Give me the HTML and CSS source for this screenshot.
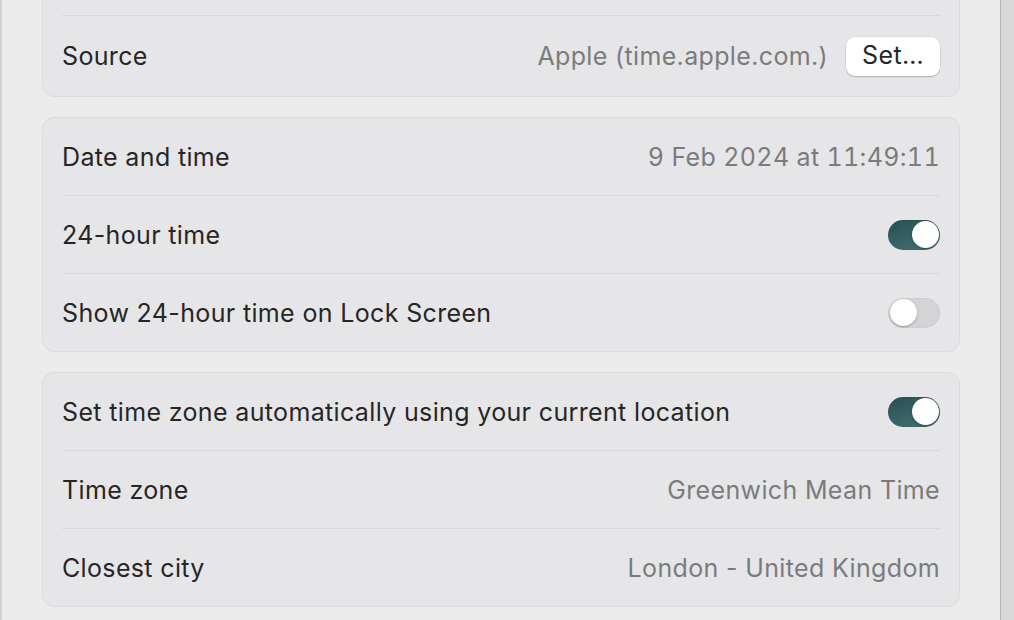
FILE: index.html
```html
<!DOCTYPE html>
<html lang="en">
<head>
<meta charset="utf-8">
<title>Date &amp; Time</title>
<link rel="stylesheet" href="styles.css">
</head>
<body>
<div class="window">
  <div class="edge"></div>
  <main class="content">
    <section class="card first">
      <div class="row"></div>
      <div class="row tall">
        <span class="label">Source</span>
        <span class="right">
          <span class="value">Apple (time.apple.com.)</span>
          <button class="btn">Set…</button>
        </span>
      </div>
    </section>
    <section class="card">
      <div class="row">
        <span class="label">Date and time</span>
        <span class="value digits">9 Feb 2024 at 11:49:11</span>
      </div>
      <div class="row">
        <span class="label">24-hour time</span>
        <span class="toggle on"><span class="knob"></span></span>
      </div>
      <div class="row">
        <span class="label">Show 24-hour time on Lock Screen</span>
        <span class="toggle"><span class="knob"></span></span>
      </div>
    </section>
    <section class="card">
      <div class="row">
        <span class="label">Set time zone automatically using your current location</span>
        <span class="toggle on"><span class="knob"></span></span>
      </div>
      <div class="row">
        <span class="label">Time zone</span>
        <span class="value">Greenwich Mean Time</span>
      </div>
      <div class="row">
        <span class="label">Closest city</span>
        <span class="value">London - United Kingdom</span>
      </div>
    </section>
  </main>
  <div class="scrollbar"></div>
</div>
</body>
</html>
```

FILE: styles.css
```css
* { box-sizing: border-box; }
html, body {
  margin: 0;
  padding: 0;
  height: 100%;
  overflow: hidden;
}
body {
  background: #ececed;
  font-family: Inter, "Noto Sans", "Liberation Sans", sans-serif;
  font-size: 25px;
  letter-spacing: 0.35px;
  color: #262626;
}
.window {
  display: flex;
  height: 620px;
  width: 1014px;
}
.edge {
  width: 2px;
  flex: none;
  background: #d2d2d4;
}
.content {
  flex: 1;
  padding: 0 40px;
  display: flex;
  flex-direction: column;
  gap: 20px;
}
.scrollbar {
  width: 14px;
  flex: none;
  background: #d9d9da;
  border-left: 1px solid #b4b4b6;
}
.card {
  background: #e6e6e8;
  border: 1px solid #dcdcde;
  border-radius: 12px;
  flex: none;
}
.card.first {
  margin-top: -63px;
}
.row {
  margin: 0 19px;
  height: 77px;
  display: flex;
  align-items: center;
  justify-content: space-between;
}
.row + .row {
  border-top: 1px solid #d9d9db;
  height: 78px;
}
.row.tall {
  height: 81px;
}
.label {
  color: #262626;
}
.value {
  color: #7b7b7d;
}
.digits {
  font-variant-numeric: tabular-nums;
}
.right {
  display: flex;
  align-items: center;
  gap: 18px;
}
.btn {
  font: inherit;
  letter-spacing: inherit;
  color: #262626;
  background: #ffffff;
  border: none;
  border-radius: 9px;
  width: 94px;
  height: 39px;
  padding: 0 0 2px;
  box-shadow: 0 1px 1.5px rgba(0,0,0,0.22), 0 0 0 0.5px rgba(0,0,0,0.06);
}
.toggle {
  width: 52px;
  height: 30px;
  border-radius: 15px;
  background: #d4d4d6;
  box-shadow: inset 0 0 0 0.5px rgba(0,0,0,0.06);
  display: flex;
  align-items: center;
  padding: 0 1.5px;
}
.toggle.on {
  background: linear-gradient(160deg, #264f52 0%, #3a6466 60%, #46706f 100%);
  justify-content: flex-end;
}
.knob {
  width: 27px;
  height: 27px;
  border-radius: 50%;
  background: #ffffff;
  box-shadow: 0 1px 2px rgba(0,0,0,0.3);
}
```
